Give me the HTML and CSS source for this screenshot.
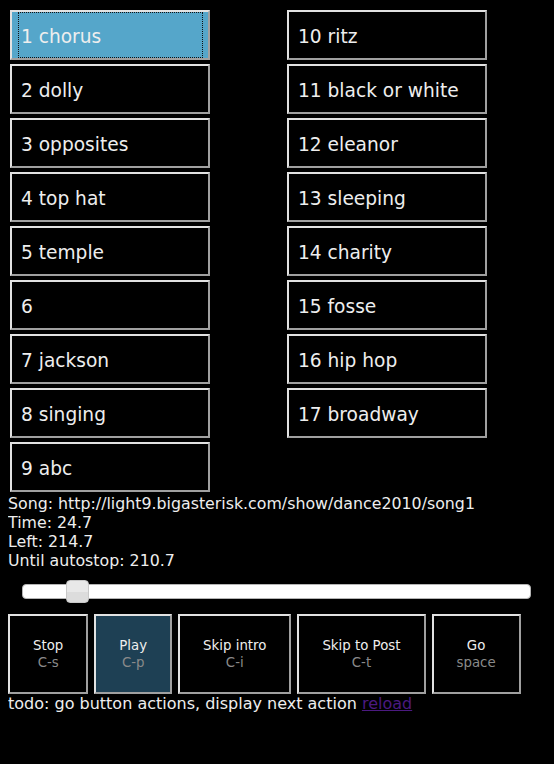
FILE: index.html
```html
<!DOCTYPE html>
<html>
<head>
<meta charset="utf-8">
<link rel="stylesheet" href="styles.css">
</head>
<body>
<div class="songs">
  <div class="col">
    <button class="song current">1 chorus</button>
    <button class="song">2 dolly</button>
    <button class="song">3 opposites</button>
    <button class="song">4 top hat</button>
    <button class="song">5 temple</button>
    <button class="song">6</button>
    <button class="song">7 jackson</button>
    <button class="song">8 singing</button>
    <button class="song">9 abc</button>
  </div>
  <div class="col">
    <button class="song">10 ritz</button>
    <button class="song">11 black or white</button>
    <button class="song">12 eleanor</button>
    <button class="song">13 sleeping</button>
    <button class="song">14 charity</button>
    <button class="song">15 fosse</button>
    <button class="song">16 hip hop</button>
    <button class="song">17 broadway</button>
  </div>
</div>
<div class="info">
  <div>Song: http://light9.bigasterisk.com/show/dance2010/song1</div>
  <div>Time: 24.7</div>
  <div>Left: 214.7</div>
  <div>Until autostop: 210.7</div>
</div>
<div class="slider">
  <div class="handle" style="left: 10.7%"></div>
</div>
<div class="controls">
  <button class="ctl"><span class="lbl">Stop</span><span class="key">C-s</span></button>
  <button class="ctl active"><span class="lbl">Play</span><span class="key">C-p</span></button>
  <button class="ctl"><span class="lbl">Skip intro</span><span class="key">C-i</span></button>
  <button class="ctl"><span class="lbl">Skip to Post</span><span class="key">C-t</span></button>
  <button class="ctl"><span class="lbl">Go</span><span class="key">space</span></button>
</div>
<div class="todo">todo: go button actions, display next action <a href="#" class="reload">reload</a></div>
</body>
</html>
```
FILE: styles.css
```css
html, body {
  background: #000;
}
body {
  margin: 8px;
  font-family: "DejaVu Sans", sans-serif;
  color: #eee;
}
.songs {
  display: grid;
  grid-template-columns: 277px auto;
}
.col {
  display: flex;
  flex-direction: column;
  align-items: flex-start;
}
button {
  font-family: "DejaVu Sans", sans-serif;
  color: #eee;
  background: #000;
  border: 2px solid;
  border-color: #e2e2e2 #a0a0a0 #a0a0a0 #e2e2e2;
  margin: 0;
  cursor: pointer;
}
.song {
  position: relative;
  width: 200px;
  height: 50px;
  margin: 2px;
  padding: 2px 0 0 9px;
  font-size: 18.6px;
  text-align: left;
  display: flex;
  align-items: center;
}
.song.current {
  background: #55a6ca;
}
.song.current::after {
  content: "";
  position: absolute;
  top: 0;
  bottom: 0;
  left: 6px;
  right: 5px;
  border: 1px dotted #111;
}
.info {
  font-size: 15.8px;
  line-height: 19px;
}
.slider {
  position: relative;
  box-sizing: border-box;
  height: 15px;
  margin: 14px 15px 15px 14px;
  background: #fff;
  border: 1px solid #b4b4b4;
  border-radius: 4px;
}
.handle {
  position: absolute;
  top: -5px;
  width: 23px;
  height: 23px;
  margin-left: -11.5px;
  box-sizing: border-box;
  border: 1px solid #c8c8c8;
  border-radius: 4px;
  background: linear-gradient(to bottom, #e8e8e8 0%, #e8e8e8 50%, #dcdcdc 50%, #dcdcdc 100%);
}
.controls {
  display: flex;
  gap: 6px;
}
.ctl {
  height: 80px;
  padding: 0 23px;
  font-size: 13.33px;
  line-height: 17px;
  display: flex;
  flex-direction: column;
  align-items: center;
  justify-content: center;
}
.ctl.active {
  background: #1e4054;
}
.ctl .key {
  color: #8a8a8a;
}
.todo {
  font-size: 16px;
  line-height: 19px;
}
.reload {
  color: #4b1a80;
}
```
